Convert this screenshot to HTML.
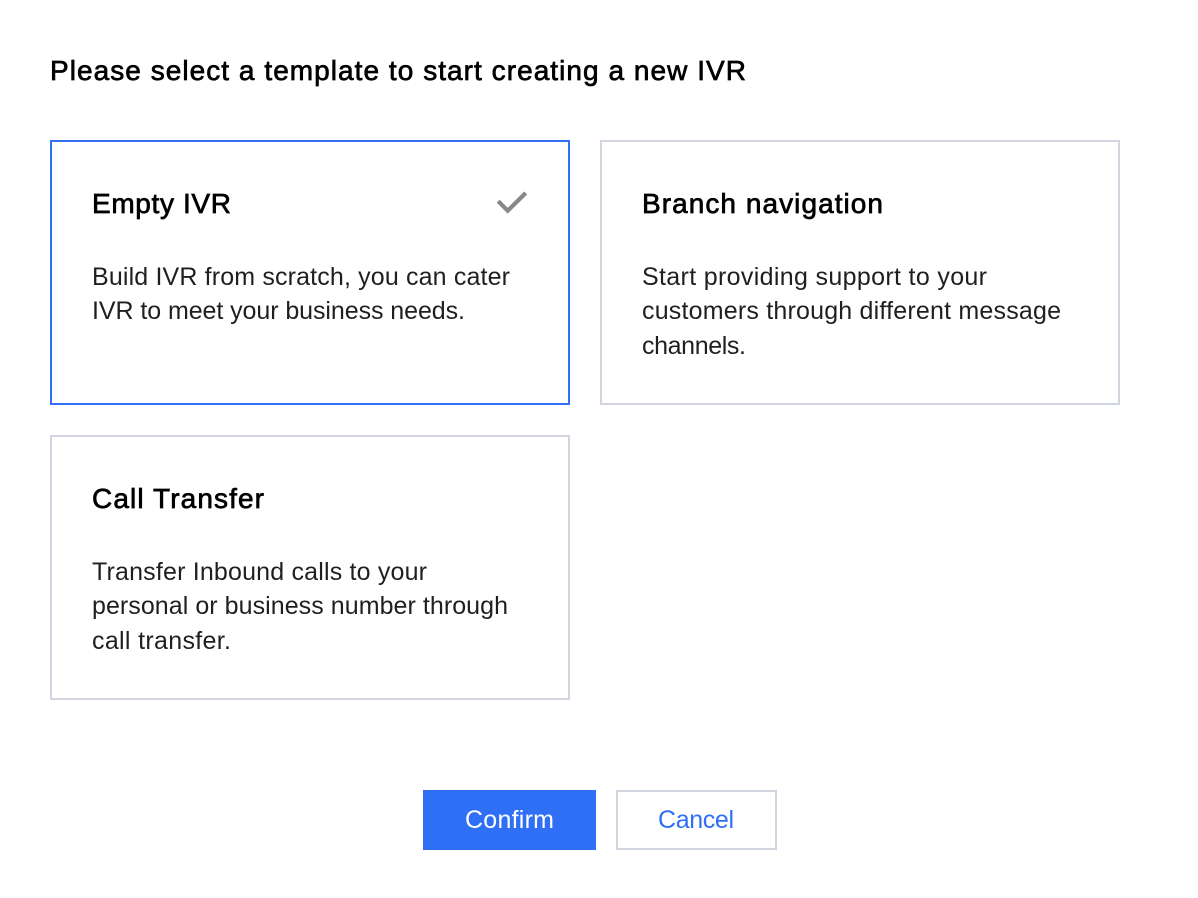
<!DOCTYPE html>
<html>
<head>
<meta charset="utf-8">
<style>
html,body{margin:0;padding:0;background:#fff}
body{width:1198px;height:898px;overflow:hidden;position:relative;font-family:"Liberation Sans",Arial,sans-serif}
.b{position:absolute;box-sizing:border-box}
.card{border:2px solid #d1d5e0;background:#fff;width:520px;height:265px}
svg{position:absolute;left:0;top:0}
text{font-family:"Liberation Sans",Arial,sans-serif}
.h{font-size:28px;fill:#000;stroke:#000;stroke-width:.7px}
.d{font-size:25px;fill:#1f1f1f}
.t{font-size:25px}
</style>
</head>
<body>
<div class="b card" style="left:50px;top:140px;border-color:#3170f5"></div>
<div class="b card" style="left:600px;top:140px"></div>
<div class="b card" style="left:50px;top:435px"></div>
<div class="b" style="left:423px;top:790px;width:173px;height:60px;background:#2f6ff6"></div>
<div class="b" style="left:616px;top:790px;width:161px;height:60px;border:2px solid #d1d5e0"></div>
<svg width="1198" height="898" viewBox="0 0 1198 898">
<text class="h" x="50" y="80" textLength="696" lengthAdjust="spacing">Please select a template to start creating a new IVR</text>
<text class="h" x="92" y="213" textLength="139" lengthAdjust="spacing">Empty IVR</text>
<text class="d" x="92" y="285" textLength="418" lengthAdjust="spacing">Build IVR from scratch, you can cater</text>
<text class="d" x="92" y="319" textLength="373" lengthAdjust="spacing">IVR to meet your business needs.</text>
<path d="M498.2 201.2L507.7 210.7L525.7 193" fill="none" stroke="#888" stroke-width="4.2"/>
<text class="h" x="642" y="213" textLength="241" lengthAdjust="spacing">Branch navigation</text>
<text class="d" x="642" y="285" textLength="345" lengthAdjust="spacing">Start providing support to your</text>
<text class="d" x="642" y="319" textLength="419" lengthAdjust="spacing">customers through different message</text>
<text class="d" x="642" y="354" textLength="104" lengthAdjust="spacing">channels.</text>
<text class="h" x="92" y="508" textLength="172" lengthAdjust="spacing">Call Transfer</text>
<text class="d" x="92" y="580" textLength="335" lengthAdjust="spacing">Transfer Inbound calls to your</text>
<text class="d" x="92" y="614" textLength="416" lengthAdjust="spacing">personal or business number through</text>
<text class="d" x="92" y="649" textLength="139" lengthAdjust="spacing">call transfer.</text>
<text class="t" x="465" y="828" fill="#fff" textLength="89" lengthAdjust="spacing">Confirm</text>
<text class="t" x="658" y="828" fill="#2f6ff6" textLength="76" lengthAdjust="spacing">Cancel</text>
</svg>
</body>
</html>
